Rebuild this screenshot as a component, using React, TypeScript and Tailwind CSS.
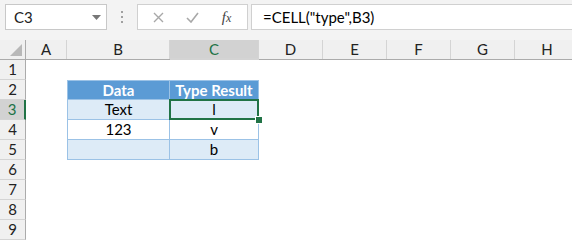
import React from "react";

const cols = ["A", "B", "C", "D", "E", "F", "G", "H"];
const colW = ["w-[41px]", "w-[103px]", "w-[89px]", "w-[64px]", "w-[64px]", "w-[64px]", "w-[64px]", "w-[64px]"];
const rows = [1, 2, 3, 4, 5, 6, 7, 8, 9];

const font = { fontFamily: "Lato, 'Liberation Sans', Arial, sans-serif" };

function Cell({ r, c }: { r: number; c: number }) {
  const inTable = r >= 2 && r <= 5 && (c === 1 || c === 2);
  if (!inTable) return <div className={`${colW[c]} h-5 shrink-0`} />;

  const data: Record<string, string> = {
    "2-1": "Data",
    "2-2": "Type Result",
    "3-1": "Text",
    "3-2": "l",
    "4-1": "123",
    "4-2": "v",
    "5-2": "b",
  };
  const text = data[`${r}-${c}`] ?? "";
  const header = r === 2;
  const bg = header ? "bg-[#5b9bd5]" : r === 4 ? "bg-white" : "bg-[#ddebf7]";
  const selected = r === 3 && c === 2;

  return (
    <div
      className={`${colW[c]} h-5 shrink-0 relative flex items-center justify-center border-[#9bc2e6] border-b ${
        c === 1 ? "border-l border-r" : "border-r"
      } ${r === 2 ? "border-t" : ""} ${bg} ${
        header ? "text-white font-bold" : "text-black"
      } text-[15px] leading-none`}
    >
      {text}
      {selected && (
        <>
          <div className="absolute -left-[1px] -top-[1px] -right-[1px] -bottom-[1px] border-2 border-[#217346]" />
          <div className="absolute z-10 -right-[5px] -bottom-[5px] w-[8px] h-[8px] bg-[#217346] border border-white" />
        </>
      )}
    </div>
  );
}

export default function App() {
  return (
    <div className="w-[572px] h-[240px] overflow-hidden bg-white select-none" style={font}>
      {/* formula bar */}
      <div className="h-10 bg-[#f3f3f3] flex items-start pt-[4px] pl-[5px]">
        <div className="w-[102px] h-[26px] bg-white border border-[#c8c8c8] flex items-center justify-between pl-[8px] pr-[5px] text-[15px] text-[#222]">
          <span>C3</span>
          <svg width="9" height="5" viewBox="0 0 9 5">
            <path d="M0 0 L9 0 L4.5 5 Z" fill="#777" />
          </svg>
        </div>
        <div className="w-[30px] h-[26px] flex flex-col items-center justify-center gap-[3px]">
          <span className="w-[2px] h-[2px] bg-[#a0a0a0]" />
          <span className="w-[2px] h-[2px] bg-[#a0a0a0]" />
          <span className="w-[2px] h-[2px] bg-[#a0a0a0]" />
        </div>
        <div className="w-[111px] h-[26px] bg-white border border-[#d0d0d0] flex items-center">
          <div className="w-[40px] flex justify-center">
            <svg width="11" height="11" viewBox="0 0 11 11">
              <path d="M1 1 L10 10 M10 1 L1 10" stroke="#a8a8a8" strokeWidth="1.4" />
            </svg>
          </div>
          <div className="w-[28px] flex justify-center">
            <svg width="13" height="11" viewBox="0 0 13 11">
              <path d="M1 6 L5 10 L12 1" stroke="#a8a8a8" strokeWidth="1.6" fill="none" />
            </svg>
          </div>
          <div
            className="flex-1 flex justify-center text-[15px] italic text-[#444]"
            style={{ fontFamily: "'Liberation Serif', 'Times New Roman', serif" }}
          >
            <span>f</span>
            <span className="text-[12px] mt-[3px]">x</span>
          </div>
        </div>
        <div className="flex-1 h-[26px] ml-[3px] bg-white border-y border-l border-[#d0d0d0] flex items-center pl-[11px] text-[15px] text-black">
          =CELL("type",B3)
        </div>
      </div>

      {/* column headers */}
      <div className="flex h-5 bg-[#f0f0f0] border-b border-[#ababab]">
        <div className="w-[26px] shrink-0 relative border-r border-[#ababab]">
          <svg className="absolute right-[3px] bottom-[3px]" width="12" height="12" viewBox="0 0 12 12">
            <path d="M12 0 L12 12 L0 12 Z" fill="#b8b8b8" />
          </svg>
        </div>
        {cols.map((c, i) => (
          <div
            key={c}
            className={`${colW[i]} shrink-0 flex items-center justify-center text-[15px] ${
              c === "C"
                ? "bg-[#d2d2d2] text-[#217346] border-b-2 border-[#217346] -mb-[1px]"
                : "text-[#222]"
            } ${i < cols.length - 1 ? "border-r border-[#d4d4d4]" : ""}`}
          >
            {c}
          </div>
        ))}
      </div>

      {/* rows */}
      {rows.map((r) => (
        <div key={r} className="flex h-5">
          <div
            className={`w-[26px] shrink-0 flex items-center justify-center text-[15px] border-b border-[#d4d4d4] ${
              r === 3
                ? "bg-[#d2d2d2] text-[#217346] border-r-2 border-r-[#217346]"
                : "bg-[#f0f0f0] text-[#222] border-r border-r-[#ababab]"
            }`}
          >
            {r}
          </div>
          {cols.map((_, i) => (
            <Cell key={i} r={r} c={i} />
          ))}
        </div>
      ))}
    </div>
  );
}
